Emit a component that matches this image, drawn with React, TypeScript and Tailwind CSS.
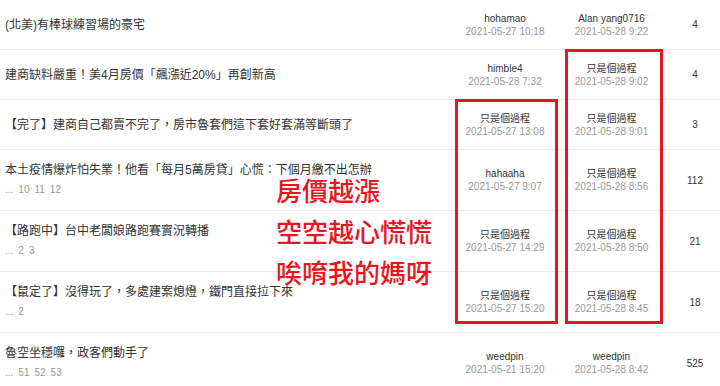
import React from "react";

type Topic = {
  title: string;
  pages?: string[];
  author: string;
  postedAt: string;
  lastBy: string;
  lastAt: string;
  replies: string;
};

const topics: Topic[] = [
  {
    title: "(北美)有棒球練習場的豪宅",
    author: "hohamao",
    postedAt: "2021-05-27 10:18",
    lastBy: "Alan yang0716",
    lastAt: "2021-05-28 9:22",
    replies: "4",
  },
  {
    title: "建商缺料嚴重！美4月房價「飆漲近20%」再創新高",
    author: "himble4",
    postedAt: "2021-05-28 7:32",
    lastBy: "只是個過程",
    lastAt: "2021-05-28 9:02",
    replies: "4",
  },
  {
    title: "【完了】建商自己都賣不完了，房市魯套們這下套好套滿等斷頭了",
    author: "只是個過程",
    postedAt: "2021-05-27 13:08",
    lastBy: "只是個過程",
    lastAt: "2021-05-28 9:01",
    replies: "3",
  },
  {
    title: "本土疫情爆炸怕失業！他看「每月5萬房貸」心慌：下個月繳不出怎辦",
    pages: ["10", "11", "12"],
    author: "hahaaha",
    postedAt: "2021-05-27 9:07",
    lastBy: "只是個過程",
    lastAt: "2021-05-28 8:56",
    replies: "112",
  },
  {
    title: "【路跑中】台中老闆娘路跑賽實況轉播",
    pages: ["2", "3"],
    author: "只是個過程",
    postedAt: "2021-05-27 14:29",
    lastBy: "只是個過程",
    lastAt: "2021-05-28 8:50",
    replies: "21",
  },
  {
    title: "【鼠定了】沒得玩了，多處建案熄燈，鐵門直接拉下來",
    pages: ["2"],
    author: "只是個過程",
    postedAt: "2021-05-27 15:20",
    lastBy: "只是個過程",
    lastAt: "2021-05-28 8:45",
    replies: "18",
  },
  {
    title: "魯空坐穩囉，政客們動手了",
    pages: ["51", "52", "53"],
    author: "weedpin",
    postedAt: "2021-05-21 15:20",
    lastBy: "weedpin",
    lastAt: "2021-05-28 8:42",
    replies: "525",
  },
];

function Who({ name, at }: { name: string; at: string }) {
  return (
    <div className="flex flex-col items-center justify-center">
      <span className="text-[10px] leading-[13px] text-[#333]">{name}</span>
      <span className="text-[10px] leading-[13px] text-[#999]">{at}</span>
    </div>
  );
}

export default function App() {
  return (
    <div
      className="relative h-[386px] w-[720px] overflow-hidden bg-white"
      style={{ fontFamily: '"Liberation Sans", "Noto Sans CJK TC", sans-serif' }}
    >
      {topics.map((t, i) => (
        <div
          key={i}
          className={`grid grid-cols-[455px_100px_113px_52px] border-b border-[#ececec] ${
            t.pages ? "h-[61px]" : "h-[50px]"
          }`}
        >
          <div className="flex flex-col justify-center pl-[5px]">
            <span className="whitespace-nowrap text-[12px] leading-[20px] text-[#333]">{t.title}</span>
            {t.pages && (
              <span className="flex gap-[5px] text-[10px] leading-[20px] text-[#999]">
                <span>...</span>
                {t.pages.map((p) => (
                  <span key={p}>{p}</span>
                ))}
              </span>
            )}
          </div>
          <Who name={t.author} at={t.postedAt} />
          <Who name={t.lastBy} at={t.lastAt} />
          <div className="flex items-center justify-center pl-[2px] text-[10px] text-[#333]">{t.replies}</div>
        </div>
      ))}

      {/* annotation boxes */}
      <div className="absolute left-[455px] top-[99px] h-[225px] w-[103px] border-[3px] border-[#ea1520]" />
      <div className="absolute left-[565px] top-[49px] h-[275px] w-[98px] border-[3px] border-[#ea1520]" />

      <div className="absolute left-[276px] top-[172px] flex flex-col text-[26px] font-medium leading-[41px] text-[#ea1520]">
        <span>房價越漲</span>
        <span>空空越心慌慌</span>
        <span>唉唷我的媽呀</span>
      </div>
    </div>
  );
}
